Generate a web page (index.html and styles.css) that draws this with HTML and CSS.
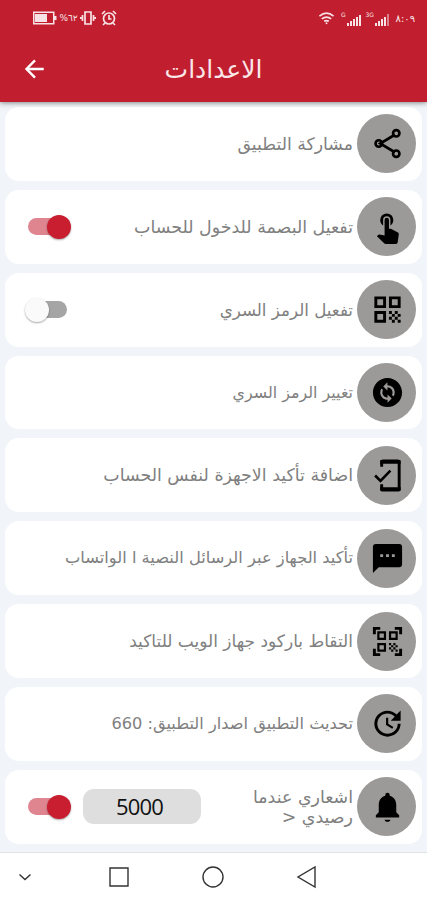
FILE: index.html
```html
<!DOCTYPE html>
<html lang="ar" dir="rtl">
<head>
    <meta charset="UTF-8" />
    <meta name="viewport" content="width=device-width, initial-scale=1.0"/>
    <title>الاعدادات</title>
    <link rel="stylesheet" href="styles.css">
</head>
<body>
    <header class="header">
        <div class="status">
            <div class="status-side">
                <span class="clock">٨:٠٩</span>
                <svg class="signal" viewBox="0 0 15 12"><path d="M0 9h2v3H0zM3 7h2v5H3zM6 5h2v7H6zM9 3h2v9H9z"/><path opacity=".5" d="M12 0h2v12h-2z"/></svg>
                <span class="net">3G</span>
                <svg class="signal" viewBox="0 0 15 12"><path d="M0 9h2v3H0zM3 7h2v5H3zM6 5h2v7H6zM9 3h2v9H9zM12 1h2v11h-2z"/></svg>
                <span class="net">G</span>
                <svg class="wifi" viewBox="0 0 18 14"><path d="M1.5 5Q9-1.5 16.500 5M4 8q5-4 10 0M6.500 10.500q2.500-1.500 5 0"/><circle cx="9" cy="12.500" r="1"/></svg>
            </div>
            <div class="status-side">
                <svg class="alarm" viewBox="0 0 16 16"><circle cx="8" cy="8.500" r="5.500"/><path d="M8 5v4h2.500M1 4l3-3M15 4l-3-3M4 13l-2 2M12 13l2 2"/></svg>
                <svg class="vibrate" viewBox="0 0 16 16"><path d="M5 2h6v12H5zM2.500 5v6M13.500 5v6M.7 7v2M15.300 7v2"/></svg>
                <span class="percent">٦٢%</span>
                <svg class="battery" viewBox="0 0 24 14"><rect x=".75" y="1.250" width="20" height="11.500"/><path d="M2 3h12v8H2zM21 5h2.500v4H21z"/></svg>
            </div>
        </div>
        <div class="bar">
            <h1>الاعدادات</h1>
            <svg class="back" viewBox="0 0 24 24"><path d="M21.500 12H3M12 2.500L2.700 12l9.300 9.500"/></svg>
        </div>
    </header>

    <main class="list">
        <div class="card">
            <div class="icon"><svg viewBox="0 0 24 24"><path class="line" d="M17 6L7 12l10 6"/><g class="dot"><circle cx="18" cy="5" r="2.200"/><circle cx="6" cy="12" r="2.200"/><circle cx="18" cy="19" r="2.200"/></g></svg></div>
            <span class="label t1">مشاركة التطبيق</span>
        </div>
        <div class="card">
            <div class="icon"><svg viewBox="0 0 24 24"><path d="M9 11.240V7.500a2.500 2.500 0 0 1 5 0v3.740c1.210-.81 2-2.180 2-3.740a4.500 4.500 0 0 0-9 0c0 1.560.79 2.930 2 3.740zm9.840 4.630l-4.540-2.260c-.17-.07-.35-.11-.54-.11H13v-6a1.500 1.500 0 0 0-3 0v10.740l-3.430-.72c-.08-.01-.15-.03-.24-.03-.31 0-.59.13-.79.33l-.79.8 4.940 4.940c.27.27.65.44 1.060.44h6.790c.75 0 1.330-.55 1.440-1.280l.75-5.270c.01-.07.02-.14.02-.2 0-.62-.38-1.160-.91-1.380z"/></svg></div>
            <span class="label t2">تفعيل البصمة للدخول للحساب</span>
            <div class="switch on"><i></i></div>
        </div>
        <div class="card">
            <div class="icon"><svg viewBox="0 0 24 24"><path fill-rule="evenodd" d="M3 3h8v8H3zM5 5v4h4V5zM13 3h8v8h-8zM15 5v4h4V5zM3 13h8v8H3zM5 15v4h4v-4z"/><path d="M13 13h2v2h-2zM15 15h2v2h-2zM13 17h2v2h-2zM15 19h2v2h-2zM17 13h2v2h-2zM17 17h2v2h-2zM19 15h2v2h-2zM19 19h2v2h-2z"/></svg></div>
            <span class="label t3">تفعيل الرمز السري</span>
            <div class="switch"><i></i></div>
        </div>
        <div class="card">
            <div class="icon"><svg viewBox="0 0 24 24"><path d="M12 2C6.480 2 2 6.480 2 12s4.480 10 10 10 10-4.480 10-10S17.520 2 12 2zm.06 17v-2.010H12c-1.280 0-2.560-.49-3.540-1.460-1.710-1.710-1.920-4.350-.64-6.290l1.100 1.100c-.71 1.330-.53 3.010.59 4.130.7.700 1.620 1.030 2.540 1.010v-2.140l2.830 2.830L12.060 19zm4.110-4.240l-1.100-1.100c.71-1.330.53-3.010-.59-4.130C13.790 8.840 12.900 8.500 12 8.500h-.06v2.150L9.110 7.830 11.940 5v2.020c1.300-.02 2.610.45 3.600 1.450 1.700 1.700 1.910 4.350.63 6.290z"/></svg></div>
            <span class="label t4">تغيير الرمز السري</span>
        </div>
        <div class="card">
            <div class="icon"><svg viewBox="0 0 24 24"><path class="thick" d="M8 6V2.500h12v19H8V18"/><path class="line" d="M3.500 12l3.700 3.700 6.800-7"/><path d="M9 1h10a2 2 0 0 1 2 2v1H7V3a2 2 0 0 1 2-2zM7 20h14v1a2 2 0 0 1-2 2H9a2 2 0 0 1-2-2z"/></svg></div>
            <span class="label t5">اضافة تأكيد الاجهزة لنفس الحساب</span>
        </div>
        <div class="card">
            <div class="icon"><svg viewBox="0 0 24 24"><path fill-rule="evenodd" d="M20 2H4a2 2 0 0 0-2 2v18l4-4h14a2 2 0 0 0 2-2V4a2 2 0 0 0-2-2zM7 9h2v2H7zM11 9h2v2h-2zM15 9h2v2h-2z"/></svg></div>
            <span class="label t6">تأكيد الجهاز عبر الرسائل النصية ا الواتساب</span>
        </div>
        <div class="card">
            <div class="icon"><svg viewBox="0 0 24 24"><path fill-rule="evenodd" d="M5 5h6v6H5zM6.500 6.500v3h3v-3zM13 5h6v6h-6zM14.500 6.500v3h3v-3zM5 13h6v6H5zM6.500 14.500v3h3v-3z"/><path d="M2 2h5v2H4v3H2zM22 2h-5v2h3v3h2zM2 22h5v-2H4v-3H2zM22 22h-5v-2h3v-3h2z"/><path d="M13 13h1.500v1.500H13zM14.500 14.500H16V16h-1.500zM16 13h1.500v1.500H16zM13 16h1.500v1.500H13zM14.500 17.500H16V19h-1.500zM16 16h1.500v1.500H16zM17.500 14.500H19V16h-1.500zM17.500 17.500H19V19h-1.500z"/></svg></div>
            <span class="label t7">التقاط باركود جهاز الويب للتاكيد</span>
        </div>
        <div class="card">
            <div class="icon"><svg viewBox="0 0 24 24"><path d="M21 10.120h-6.780l2.740-2.820c-2.730-2.700-7.150-2.800-9.880-.1-2.730 2.710-2.730 7.080 0 9.790s7.150 2.710 9.880 0C18.320 15.650 19 14.080 19 12.100h2c0 1.980-.88 4.550-2.640 6.290-3.510 3.480-9.210 3.480-12.720 0-3.500-3.470-3.530-9.110-.02-12.580s9.140-3.470 12.650 0L21 3v7.120zM12.500 8v4.250l3.500 2.080-.72 1.210L11 13V8h1.500z"/></svg></div>
            <span class="label t8">تحديث التطبيق اصدار التطبيق: 660</span>
        </div>
        <div class="card">
            <div class="icon"><svg viewBox="0 0 24 24"><path d="M12 22.500c1.100 0 2-.7 2-1.500h-4c0 .8.900 1.500 2 1.500zM18 16v-5c0-3.070-1.640-5.640-4.500-6.320V4a1.500 1.500 0 0 0-3 0v.68C7.630 5.360 6 7.920 6 11v5l-2 2v1.500h16V18l-2-2z"/></svg></div>
            <span class="label t9">اشعاري عندما<br>رصيدي &lt;</span>
            <div class="amount">5000</div>
            <div class="switch on"><i></i></div>
        </div>
    </main>

    <nav class="softkeys">
        <svg viewBox="0 0 24 24"><path d="M20 2v20L3 12z"/></svg>
        <svg viewBox="0 0 24 24"><circle cx="12" cy="12" r="10"/></svg>
        <svg viewBox="0 0 24 24"><path d="M3 3h18v18H3z"/></svg>
        <svg viewBox="0 0 24 24"><path d="M6.500 9.500l5.500 5 5.500-5"/></svg>
    </nav>
</body>
</html>
```
FILE: styles.css
```css
* {
    box-sizing: border-box;
}
body {
    font-family: "DejaVu Sans", sans-serif;
    margin: 0;
    height: 900px;
    display: flex;
    flex-direction: column;
    overflow: hidden;
    background-color: #f1f5f9;
}
svg {
    display: block;
    flex: none;
}
.header {
    height: 102px;
    background-color: #c11f30;
    color: white;
    box-shadow: 0 1px 5px rgba(0, 0, 0, 0.45);
    position: relative;
}
.status {
    height: 36px;
    padding: 0 12px 0 33px;
    display: flex;
    justify-content: space-between;
    align-items: center;
    opacity: 0.88;
}
.status-side {
    display: flex;
    align-items: center;
}
.status svg {
    fill: white;
}
.clock {
    font-size: 10px;
    width: 21px;
    white-space: nowrap;
}
.net {
    font-size: 6px;
    line-height: 8px;
    margin: 0 1px 7px 0;
}
.signal {
    width: 15px;
    height: 12px;
    margin: 4px 4px 0 0;
}
.wifi {
    width: 17px;
    height: 14px;
    margin-right: 6px;
}
.status .wifi path, .status .alarm, .status .vibrate {
    fill: none;
    stroke: white;
    stroke-width: 1.7;
}
.alarm, .vibrate {
    width: 16px;
    height: 16px;
}
.vibrate {
    margin-right: 5px;
}
.percent {
    font-size: 9px;
    width: 21px;
    text-align: center;
    margin-right: 1px;
}
.battery {
    width: 24px;
    height: 14px;
    margin-right: 1px;
}
.battery rect {
    fill: none;
    stroke: white;
    stroke-width: 1.5;
}
.bar {
    height: 66px;
    display: grid;
    grid-template-columns: 46px 1fr 46px;
    align-items: center;
}
.bar h1 {
    grid-column: 2;
    margin: 0;
    font-size: 25px;
    font-weight: normal;
    text-align: center;
    color: #fbe6e8;
}
.back {
    width: 22px;
    height: 22px;
    fill: none;
    stroke: white;
    stroke-width: 2.6;
}
.list {
    height: 750px;
    padding: 5px 5px 0 5px;
    display: flex;
    flex-direction: column;
    gap: 9px;
}
.card {
    height: 73.87px;
    flex: none;
    display: flex;
    align-items: center;
    padding: 0 6px 0 21px;
    background: white;
    border-radius: 14px;
}
.icon {
    width: 59px;
    height: 59px;
    flex: none;
    display: flex;
    align-items: center;
    justify-content: center;
    background-color: #9c9a98;
    border-radius: 50%;
}
.icon svg {
    width: 35px;
    height: 35px;
    margin-left: 1px;
}
.line, .dot, .thick {
    fill: none;
    stroke: black;
    stroke-width: 1.8;
}
.thick {
    stroke-width: 2;
}
.label {
    margin-right: 4px;
    margin-left: auto;
    color: #808080;
    font-size: 17px;
    line-height: 20px;
    white-space: nowrap;
}
.t1 {
    font-size: 17.3px;
}
.t2, .t5 {
    font-size: 17.4px;
}
.t3 {
    font-size: 16.7px;
}
.t4 {
    font-size: 15.9px;
}
.t6 {
    font-size: 16.3px;
}
.t8 {
    font-size: 16.2px;
}
.t9 {
    font-size: 17.4px;
}
.switch {
    width: 36px;
    height: 17px;
    flex: none;
    display: flex;
    align-items: center;
    direction: ltr;
    margin-left: 5px;
    border-radius: 9px;
    background: #a5a5a5;
}
.switch i {
    width: 24px;
    height: 24px;
    flex: none;
    margin-left: -6px;
    border-radius: 50%;
    background: #fafafa;
    box-shadow: 0 1px 2px rgba(0, 0, 0, 0.35);
}
.switch.on {
    margin-left: 2px;
    width: 40px;
    background: #df8590;
}
.switch.on i {
    margin-left: 19px;
    background: #c81e30;
}
.amount {
    width: 118px;
    height: 35px;
    margin-left: 15px;
    border-radius: 11px;
    background: #dedede;
    color: #111;
    font-family: "Open Sans", "Noto Sans", sans-serif;
    font-size: 22px;
    line-height: 34px;
    letter-spacing: -0.8px;
    padding-right: 5px;
    text-align: center;
}
.softkeys {
    height: 48px;
    display: flex;
    align-items: center;
    gap: 70px;
    padding-right: 108px;
    background: white;
    border-top: 1px solid #e0e2e5;
}
.softkeys svg {
    width: 24px;
    height: 24px;
    fill: none;
    stroke: #333;
    stroke-width: 1.4;
}
```
